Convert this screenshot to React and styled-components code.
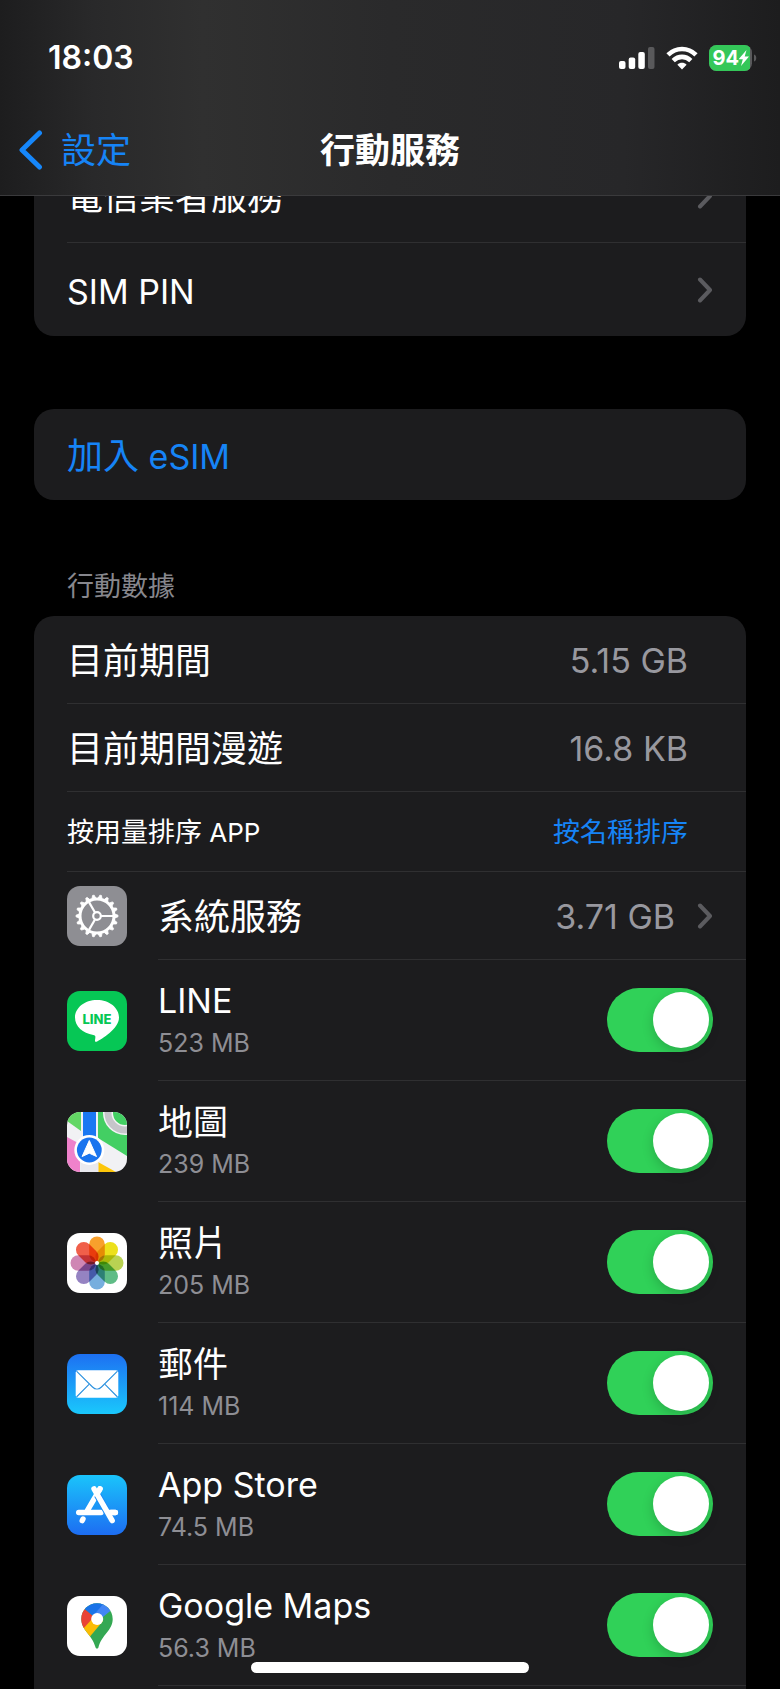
import React, { useState } from "react";
import styled, { createGlobalStyle, css } from "styled-components";

const color = {
  page: "#000",
  card: "#1c1c1e",
  line: "#2f2f31",
  text: "#fff",
  dim: "#98989f",
  faint: "#5b5b5f",
  blue: "#1684f6",
  green: "#30d158",
};

const GlobalStyle = createGlobalStyle`
  *, *::before, *::after { box-sizing: border-box; }
  body {
    margin: 0;
    background: ${color.page};
    color: ${color.text};
    font-family: Inter, "Noto Sans CJK TC", sans-serif;
    font-size: 36px;
    line-height: 44px;
  }
  h1, h2, p, ul { margin: 0; padding: 0; font-weight: 400; }
  ul { list-style: none; }
  svg { display: block; flex: none; }
`;

const plainButton = css`
  border: 0;
  padding: 0;
  background: none;
  font: inherit;
  color: inherit;
  text-align: left;
  cursor: pointer;
`;

const Screen = styled.div`
  display: flex;
  flex-direction: column;
  min-height: 100vh;
`;

const Header = styled.header`
  position: fixed;
  inset: 0 0 auto;
  z-index: 2;
  height: 196px;
  border-bottom: 1px solid #3a3a3c;
  background: linear-gradient(90deg, #1d1d1e 0%, #29292a 12%, #303030 26%, #2a2a2b 50%, #272729 80%, #1d1d1e 100%);
`;

const StatusBar = styled.div`
  display: flex;
  align-items: center;
  justify-content: space-between;
  height: 115px;
  padding: 0 23px 0 48px;
`;

const Clock = styled.time`
  font-size: 32px;
  font-weight: 600;
`;

const StatusIcons = styled.div`
  display: flex;
  align-items: center;
  gap: 11px;
`;

const NavBar = styled.nav`
  display: grid;
  grid-template-columns: 1fr auto 1fr;
  align-items: center;
  height: 70px;
  padding: 0 18px;
`;

const BackLink = styled.a`
  display: flex;
  align-items: center;
  gap: 17px;
  font-size: 35px;
  color: ${color.blue};
  text-decoration: none;
`;

const Title = styled.h1`
  font-size: 35px;
  font-weight: 600;
`;

const Main = styled.main`
  flex: 1;
  display: flex;
  flex-direction: column;
  padding: 149px 34px 0;
`;

const Card = styled.ul`
  overflow: hidden;
  border-radius: ${(p) => (p.$continues ? "20px 20px 0 0" : "20px")};
  background: ${color.card};
  flex: ${(p) => (p.$continues ? "1" : "none")};
  & + & { margin-top: 73px; }
`;

const SectionTitle = styled.h2`
  padding: 66px 33px 8px;
  font-size: 27px;
  line-height: 42px;
  color: #87878d;
`;

const Row = styled.li`
  display: flex;
  align-items: center;
  gap: 31px;
  height: ${(p) => p.$height}px;
  padding-left: 33px;
`;

const RowBody = styled.div`
  flex: 1;
  align-self: stretch;
  display: flex;
  align-items: center;
  justify-content: space-between;
  padding-right: ${(p) => (p.$inset ? 58 : 33)}px;
  border-bottom: ${(p) => (p.$last ? "0" : `1px solid ${color.line}`)};
`;

const RowButton = styled.button`
  ${plainButton}
  flex: 1;
  align-self: stretch;
  display: flex;
  align-items: center;
  justify-content: space-between;
  color: ${(p) => (p.$accent ? color.blue : color.text)};
`;

const Trailing = styled.span`
  display: flex;
  align-items: center;
  gap: 22px;
`;

const RowLabel = styled.span`
  padding-top: 3px;
  font-size: ${(p) => (p.$small ? 27 : 36)}px;
`;

const Latin = styled.span`
  font-size: ${(p) => (p.$small ? 26 : 34)}px;
`;

const Value = styled.span`
  padding-top: 3px;
  color: ${color.dim};
  font-size: 34px;
`;

const SortButton = styled.button`
  ${plainButton}
  padding-top: 3px;
  font-size: 27px;
  color: ${color.blue};
`;

const AppLabel = styled.label`
  display: flex;
  flex-direction: column;
  gap: 4px;
  padding-bottom: 2px;
`;

const AppName = styled.span`
  font-size: ${(p) => (p.$latin ? 34 : 35)}px;
  line-height: 44px;
`;

const AppUsage = styled.span`
  font-size: 25px;
  line-height: 32px;
  color: #8e8e94;
`;

const Switch = styled.input`
  appearance: none;
  display: flex;
  flex: none;
  align-items: center;
  width: 106px;
  height: 64px;
  margin: 0;
  padding: 4px;
  border-radius: 32px;
  background: #39393d;
  cursor: pointer;
  &::before {
    content: "";
    width: 56px;
    height: 56px;
    border-radius: 50%;
    background: #fff;
    box-shadow: 0 4px 12px rgba(0, 0, 0, 0.18);
  }
  &:checked {
    justify-content: flex-end;
    background: ${color.green};
  }
`;

const HomeIndicator = styled.div`
  position: fixed;
  z-index: 2;
  bottom: 16px;
  left: 50%;
  width: 278px;
  height: 11px;
  margin-left: -139px;
  border-radius: 6px;
  background: #fff;
`;

function SignalIcon() {
  return (
    <svg width="36" height="24" viewBox="0 0 36 24" fill="#fff" aria-hidden="true">
      <rect x="0" y="15" width="6.5" height="8" rx="2" />
      <rect x="9.7" y="11.5" width="6.5" height="11.5" rx="2" />
      <rect x="19.3" y="6" width="6.5" height="17" rx="2" />
      <rect x="29" y="1" width="6.5" height="22" rx="2" fill="#59595b" />
    </svg>
  );
}

function WifiIcon() {
  return (
    <svg width="32" height="24" viewBox="0 0 32 24" aria-hidden="true">
      <g fill="none" stroke="#fff" strokeWidth="4.6">
        <path d="M2 8.9C10 1.1 22 1.1 30 8.9" />
        <path d="M7.2 14.6C12.4 9.6 19.6 9.6 24.8 14.6" />
      </g>
      <path d="M16 23.4L11.4 18.8C14 16.2 18 16.2 20.6 18.8Z" fill="#fff" />
    </svg>
  );
}

function BatteryIcon() {
  return (
    <svg width="48" height="26" viewBox="0 0 48 26" role="img" aria-label="94%">
      <defs>
        <clipPath id="battery-body"><rect width="43" height="26" rx="7.5" /></clipPath>
      </defs>
      <g clipPath="url(#battery-body)">
        <rect width="43" height="26" fill="#5a5a5c" />
        <rect width="41" height="26" fill="#34c759" />
      </g>
      <path d="M45 9.5c3 .8 3 6.2 0 7z" fill="#5a5a5c" />
      <text x="3.5" y="20.2" fill="#fff" fontFamily="Inter" fontSize="20" fontWeight="700">94</text>
      <path d="M37.5 5L29.6 14.2h4.2L32 21l8-9.4h-4.3z" fill="#fff" />
    </svg>
  );
}

function Chevron() {
  return (
    <svg width="16" height="26" viewBox="0 0 16 26" aria-hidden="true">
      <path d="M3 2.5L13 13L3 23.5" fill="none" stroke={color.faint} strokeWidth="4" strokeLinecap="round" strokeLinejoin="round" />
    </svg>
  );
}

function BackChevron() {
  return (
    <svg width="26" height="40" viewBox="0 0 26 40" aria-hidden="true">
      <path d="M21.5 3L4 20L21.5 37" fill="none" stroke="#1687fb" strokeWidth="5" strokeLinecap="round" strokeLinejoin="round" />
    </svg>
  );
}

function AppIcon({ id, fill, children }) {
  return (
    <svg width="60" height="60" viewBox="0 0 60 60" aria-hidden="true">
      <defs>
        <clipPath id={`${id}-tile`}><rect width="60" height="60" rx="13" /></clipPath>
        <linearGradient id={`${id}-down`} x1="0" y1="0" x2="0" y2="1">
          <stop offset="0" stopColor="#1d70f2" />
          <stop offset="1" stopColor="#1ac8fc" />
        </linearGradient>
        <linearGradient id={`${id}-up`} x1="0" y1="0" x2="0" y2="1">
          <stop offset="0" stopColor="#1ac4fb" />
          <stop offset="1" stopColor="#1d6df2" />
        </linearGradient>
      </defs>
      <g clipPath={`url(#${id}-tile)`}>
        <rect width="60" height="60" fill={fill} />
        {children}
      </g>
    </svg>
  );
}

const teeth = Array.from({ length: 18 }, (_, i) => i * 20);

function GearIcon() {
  return (
    <AppIcon id="gear" fill="#8e8e93">
      <g stroke="#fff" fill="none">
        <circle cx="30" cy="30" r="17" strokeWidth="3" />
        <circle cx="30" cy="30" r="3.8" strokeWidth="2.2" />
        <g strokeWidth="2.2">
          {[0, 120, 240].map((a) => (
            <path key={a} d="M34 30H46" transform={`rotate(${a} 30 30)`} />
          ))}
        </g>
        {teeth.map((a) => (
          <path key={a} d="M48 28.1L51 29.2V30.8L48 31.9Z" fill="#fff" strokeWidth="0.8" strokeLinejoin="round" transform={`rotate(${a} 30 30)`} />
        ))}
      </g>
    </AppIcon>
  );
}

function LineIcon() {
  return (
    <AppIcon id="line" fill="#06c755">
      <path d="M30 9C17.8 9 8 16.8 8 26.6c0 8.7 7.8 15.9 18.3 17.3 2.5.5 2.3 1.6 1.7 5.3-.2 1.1.3 2.2 2.1 1.3C34 48.6 52 38 52 26.6 52 16.8 42.2 9 30 9z" fill="#fff" />
      <text x="30" y="32.5" textAnchor="middle" fill="#06c755" fontFamily="Inter" fontSize="13" fontWeight="800">LINE</text>
    </AppIcon>
  );
}

function MapIcon() {
  return (
    <AppIcon id="map" fill="#f1f1f4">
      <path d="M0 0H14V19L0 9Z" fill="#63d765" />
      <path d="M31 0H60V44L31 26Z" fill="#43cf63" />
      <circle cx="58" cy="1" r="17" fill="none" stroke="#f4f4f6" strokeWidth="10" />
      <circle cx="58" cy="1" r="17" fill="none" stroke="#c5c5ca" strokeWidth="7" />
      <path d="M0 25L13 32V60H0Z" fill="#ef82cb" />
      <path d="M31 50L49 60H31Z" fill="#fdc60a" />
      <path d="M13.5 30H31.5V60H13.5Z" fill="#e9e9ee" />
      <rect x="16" width="13" height="28" fill="#1a78f2" />
      <circle cx="22.3" cy="38" r="15" fill="#fff" />
      <circle cx="22.3" cy="38" r="12.4" fill="#1a74ee" />
      <path d="M22.3 28.5L29.5 44.5L22.3 41.2L15.1 44.5Z" fill="#fff" stroke="#fff" strokeWidth="1" strokeLinejoin="round" />
    </AppIcon>
  );
}

const petals = ["#f8a02c", "#ece01c", "#b9d252", "#5fbc86", "#76aede", "#9583c2", "#cf86b4", "#f05f4a"];

const Petal = styled.rect`
  mix-blend-mode: multiply;
`;

function PhotosIcon() {
  return (
    <AppIcon id="photos" fill="#fff">
      {petals.map((fill, i) => (
        <Petal key={fill} x="22.2" y="3.5" width="15.6" height="25.5" rx="7.8" fill={fill} transform={`rotate(${i * 45} 30 30)`} />
      ))}
      <circle cx="30" cy="30" r="2" fill="#fff" />
    </AppIcon>
  );
}

function MailIcon() {
  return (
    <AppIcon id="mail" fill="url(#mail-down)">
      <rect x="8.7" y="16.2" width="42.6" height="27.6" rx="2.4" fill="#fff" />
      <g fill="none" stroke="#2b91df" strokeWidth="1.1">
        <path d="M9.5 17.2L25.5 33C28.2 35.7 31.8 35.7 34.5 33L50.5 17.2" />
        <path d="M9.5 43L22 30.4M50.5 43L38 30.4" />
      </g>
    </AppIcon>
  );
}

function AppStoreIcon() {
  return (
    <AppIcon id="store" fill="url(#store-up)">
      <g stroke="#fff" strokeWidth="5.4" strokeLinecap="round">
        <path d="M11.7 37.5H34" />
        <path d="M33 13.8L20.6 35.2" />
        <path d="M44 37.5H48.4" />
        <path d="M16 44L15.2 45.6" />
      </g>
      <path d="M30.5 20L45.2 45.6" stroke="#1f8df7" strokeWidth="7.4" />
      <path d="M27 13.8L45.2 45.6" stroke="#fff" strokeWidth="5.4" strokeLinecap="round" />
      <path d="M33 13.8L30 19" stroke="#fff" strokeWidth="5.4" strokeLinecap="round" />
      <path d="M42.8 37.5H48.4" stroke="#fff" strokeWidth="5.4" strokeLinecap="round" />
    </AppIcon>
  );
}

function GoogleMapsIcon() {
  return (
    <AppIcon id="gmaps" fill="#fff">
      <defs>
        <clipPath id="gmaps-pin">
          <path d="M30 7.3C21.3 7.3 14.3 14.3 14.3 23c0 11.5 11 15.5 14.3 28.6.4 1.5 2.4 1.5 2.8 0C34.7 38.5 45.7 34.5 45.7 23 45.7 14.3 38.7 7.3 30 7.3z" />
        </clipPath>
      </defs>
      <g clipPath="url(#gmaps-pin)">
        <rect x="10" y="5" width="40" height="50" fill="#34a853" />
        <path d="M14 33.5L27 18L36 25L22.2 41.5L12 42Z" fill="#fbbc04" />
        <path d="M17.7 13L27 20.8L16 33L8 32V8Z" fill="#ea4335" />
        <path d="M17.7 13L27 20.8L41 4H14Z" fill="#1a73e8" />
        <path d="M36.5 7.5L26 20L31 25L44.5 14L48 4Z" fill="#4285f4" />
      </g>
      <circle cx="30.2" cy="23" r="6" fill="#fff" />
    </AppIcon>
  );
}

const apps = [
  { name: "LINE", usage: "523 MB", Icon: LineIcon, latin: true },
  { name: "地圖", usage: "239 MB", Icon: MapIcon },
  { name: "照片", usage: "205 MB", Icon: PhotosIcon },
  { name: "郵件", usage: "114 MB", Icon: MailIcon },
  { name: "App Store", usage: "74.5 MB", Icon: AppStoreIcon, latin: true },
  { name: "Google Maps", usage: "56.3 MB", Icon: GoogleMapsIcon, latin: true },
];

function AppRow({ name, usage, Icon, latin, index }) {
  const [on, setOn] = useState(true);
  const id = `app-${index}`;
  return (
    <Row $height={121}>
      <Icon />
      <RowBody>
        <AppLabel htmlFor={id}>
          <AppName $latin={latin}>{name}</AppName>
          <AppUsage>{usage}</AppUsage>
        </AppLabel>
        <Switch id={id} type="checkbox" role="switch" checked={on} onChange={() => setOn(!on)} />
      </RowBody>
    </Row>
  );
}

export default function App() {
  return (
    <Screen>
      <GlobalStyle />
      <Header>
        <StatusBar>
          <Clock>18:03</Clock>
          <StatusIcons>
            <SignalIcon />
            <WifiIcon />
            <BatteryIcon />
          </StatusIcons>
        </StatusBar>
        <NavBar>
          <BackLink href="#settings">
            <BackChevron />
            設定
          </BackLink>
          <Title>行動服務</Title>
        </NavBar>
      </Header>

      <Main>
        <Card>
          <Row $height={94}>
            <RowBody>
              <RowButton type="button">
                <RowLabel>電信業者服務</RowLabel>
                <Chevron />
              </RowButton>
            </RowBody>
          </Row>
          <Row $height={93}>
            <RowBody $last>
              <RowButton type="button">
                <RowLabel><Latin>SIM PIN</Latin></RowLabel>
                <Chevron />
              </RowButton>
            </RowBody>
          </Row>
        </Card>

        <Card>
          <Row $height={91}>
            <RowBody $last>
              <RowButton type="button" $accent>
                <RowLabel>加入<Latin> eSIM</Latin></RowLabel>
              </RowButton>
            </RowBody>
          </Row>
        </Card>

        <SectionTitle>行動數據</SectionTitle>
        <Card $continues>
          <Row $height={88}>
            <RowBody $inset>
              <RowLabel>目前期間</RowLabel>
              <Value>5.15 GB</Value>
            </RowBody>
          </Row>
          <Row $height={88}>
            <RowBody $inset>
              <RowLabel>目前期間漫遊</RowLabel>
              <Value>16.8 KB</Value>
            </RowBody>
          </Row>
          <Row $height={80}>
            <RowBody $inset>
              <RowLabel $small>按用量排序<Latin $small> APP</Latin></RowLabel>
              <SortButton type="button">按名稱排序</SortButton>
            </RowBody>
          </Row>
          <Row $height={88}>
            <GearIcon />
            <RowBody>
              <RowButton type="button">
                <RowLabel>系統服務</RowLabel>
                <Trailing>
                  <Value>3.71 GB</Value>
                  <Chevron />
                </Trailing>
              </RowButton>
            </RowBody>
          </Row>
          {apps.map((app, i) => (
            <AppRow key={app.name} index={i} {...app} />
          ))}
        </Card>
      </Main>
      <HomeIndicator />
    </Screen>
  );
}
